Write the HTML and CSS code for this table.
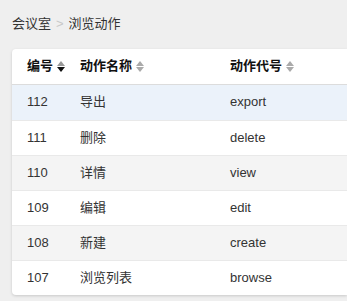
FILE: index.html
```html
<!DOCTYPE html>
<html lang="zh">
<head>
<meta charset="utf-8">
<link rel="stylesheet" href="styles.css">
</head>
<body>
<div class="crumbs"><span class="crumb">会议室</span><span class="sep">&gt;</span><span class="crumb">浏览动作</span></div>
<div class="card">
<table class="grid">
<colgroup><col class="c1"><col class="c2"><col class="c3"></colgroup>
<thead>
<tr><th><span class="th">编号<span class="sort desc"><i class="up"></i><i class="down"></i></span></span></th><th><span class="th">动作名称<span class="sort"><i class="up"></i><i class="down"></i></span></span></th><th><span class="th">动作代号<span class="sort"><i class="up"></i><i class="down"></i></span></span></th></tr>
</thead>
<tbody>
<tr class="hover"><td>112</td><td>导出</td><td>export</td></tr>
<tr><td>111</td><td>删除</td><td>delete</td></tr>
<tr class="alt"><td>110</td><td>详情</td><td>view</td></tr>
<tr><td>109</td><td>编辑</td><td>edit</td></tr>
<tr class="alt"><td>108</td><td>新建</td><td>create</td></tr>
<tr><td>107</td><td>浏览列表</td><td>browse</td></tr>
</tbody>
</table>
</div>
</body>
</html>
```
FILE: styles.css
```css
html, body { margin: 0; padding: 0; }
body {
  background: #efefef;
  font-family: "Liberation Sans", "Noto Sans CJK SC", sans-serif;
  font-size: 13px;
  color: #333;
  overflow: hidden;
  padding: 12px 0 0 12px;
  width: 347px;
  height: 301px;
  box-sizing: border-box;
}
.crumbs {
  height: 24px;
  line-height: 24px;
  margin-bottom: 13px;
  display: flex;
  gap: 5px;
  color: #333;
}
.sep { color: #c8c8c8; }
.card {
  width: 335px;
  background: #fff;
  border-radius: 4px 0 0 4px;
  box-shadow: 0 1px 3px rgba(0,0,0,0.16);
}
.grid {
  border-collapse: collapse;
  table-layout: fixed;
  width: 100%;
}
.c1 { width: 53px; }
.c2 { width: 150px; }
.grid th, .grid td {
  padding: 0 0 0 15px;
  text-align: left;
  white-space: nowrap;
  line-height: 16px;
}
.grid th {
  height: 35px;
  box-sizing: border-box;
  font-weight: bold;
  color: #111;
  border-bottom: 1px solid #dcdcdc;
}
.grid td {
  height: 34px;
  border-top: 1px solid #e9e9e9;
}
.grid tbody tr:first-child td { border-top: none; height: 35px; }
.hover td { background: #ebf2fa; }
.alt td { background: #f4f4f4; }
.th { display: inline-flex; align-items: center; gap: 4px; }
.sort { display: inline-flex; flex-direction: column; gap: 1px; }
.sort i {
  display: block;
  width: 0; height: 0;
  border-left: 4px solid transparent;
  border-right: 4px solid transparent;
}
.sort .up { border-bottom: 5px solid #aaa; }
.sort .down { border-top: 5px solid #aaa; }
.sort.desc .up { border-bottom-color: #999; }
.sort.desc .down { border-top-color: #111; }
```
